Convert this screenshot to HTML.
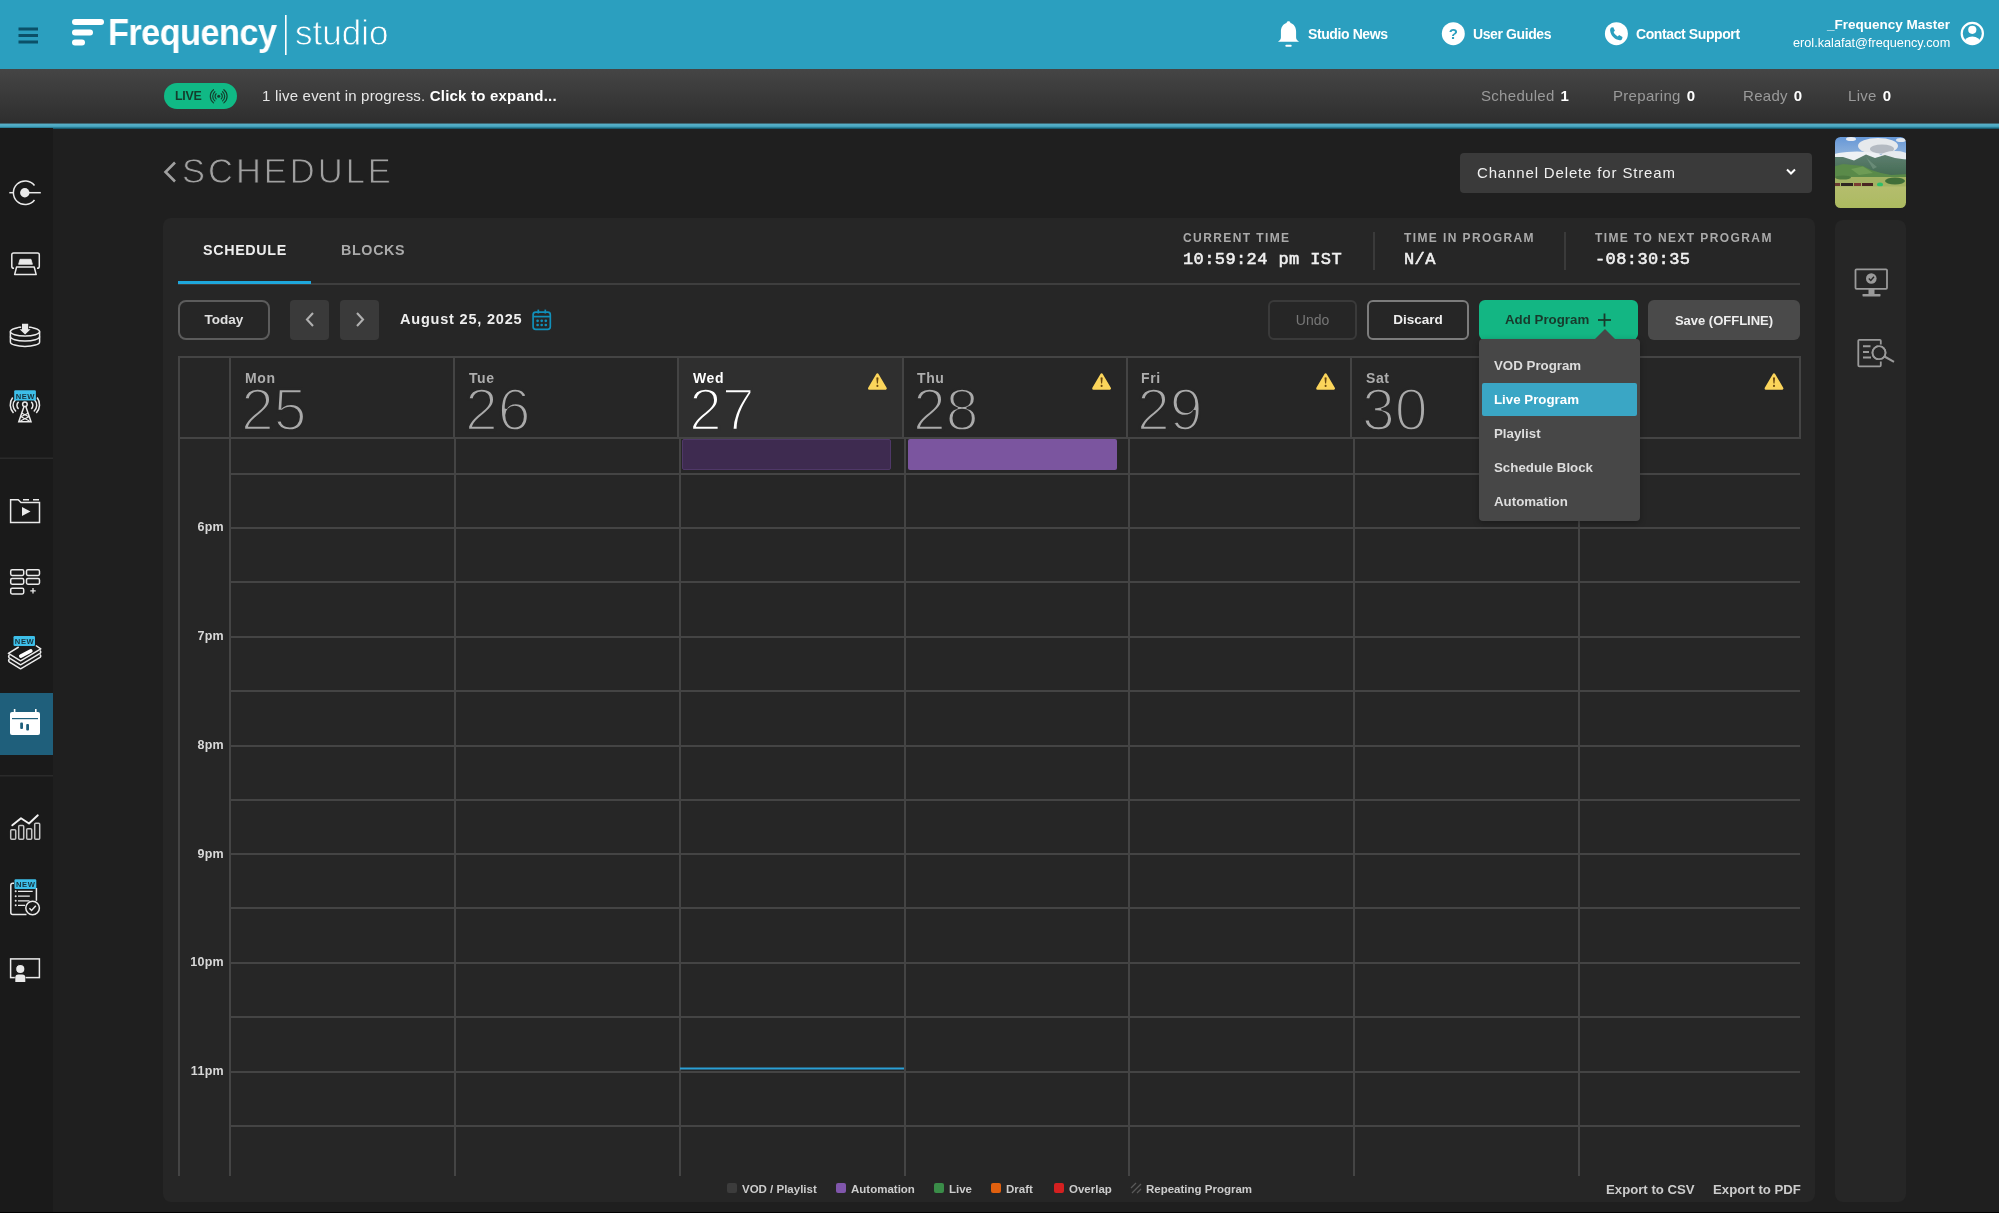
<!DOCTYPE html>
<html><head><meta charset="utf-8">
<style>
*{box-sizing:border-box;margin:0;padding:0}
html,body{width:1999px;height:1213px;overflow:hidden}
.a{will-change:transform}
body{background:#1f1f1f;font-family:"Liberation Sans",sans-serif;position:relative;color:#ddd}
.a{position:absolute;white-space:nowrap}
#hdr{left:0;top:0;width:1999px;height:69px;background:#2b9fbf}
#live{left:0;top:69px;width:1999px;height:54px;background:linear-gradient(#454545,#2e2e2e)}
#liveline{left:0;top:122.5px;width:1999px;height:5.5px;background:linear-gradient(#2a2a2a 0%,#58b0c8 18%,#4aa8c2 55%,#1d6f86 85%,#0e3f50 100%)}
#side{left:0;top:128px;width:53px;height:1085px;background:#1a1a1a}
#panel{left:163px;top:218px;width:1652px;height:984px;background:#262626;border-radius:8px}
#rpanel{left:1835px;top:220px;width:71px;height:982px;background:#262626;border-radius:8px}
.hl{font-size:14px;font-weight:bold;color:#fff;line-height:1;letter-spacing:-0.4px}
.stat{font-size:15px;color:#9a9a9a;line-height:1;letter-spacing:0.3px}
.stat b{color:#fff;margin-left:6px}
.tab{font-size:14.3px;font-weight:bold;letter-spacing:0.65px;line-height:1}
.lab{font-size:12px;font-weight:bold;letter-spacing:1.4px;color:#aaa;line-height:1}
.mono{font-family:"Liberation Mono",monospace;font-size:17px;font-weight:normal;color:#f0f0f0;line-height:1;letter-spacing:0.4px;-webkit-text-stroke:0.55px #f0f0f0}
.btn{height:40px;border-radius:6px;font-size:14px;font-weight:bold;display:flex;align-items:center;justify-content:center;line-height:1}
.dname{font-size:14px;color:#adadad;line-height:1;letter-spacing:0.6px;font-weight:bold}
.dnum{font-size:59px;color:#aaa;line-height:1;-webkit-text-stroke:2.4px #262626}
.tl{font-size:12.5px;color:#d8d8d8;font-weight:bold;line-height:1;text-align:right;width:52px;left:172px;letter-spacing:0.3px}
.dd{font-size:13.3px;color:#ddd;font-weight:bold;line-height:1;left:1494px}
.lg{font-size:11.5px;font-weight:bold;color:#ccc;line-height:1}
.sq{width:10px;height:10px;border-radius:2px}
</style></head><body>
<div id="hdr" class="a"></div>
<div id="live" class="a"></div>
<div id="liveline" class="a"></div>
<div id="side" class="a"></div>
<div id="panel" class="a"></div>
<div id="rpanel" class="a"></div>
<div class="a" style="left:0;top:1212px;width:1999px;height:1px;background:#000"></div>

<!-- header text -->
<div class="a" style="left:108px;top:14px;font-size:37px;font-weight:bold;color:#fff;letter-spacing:-0.6px;line-height:1;transform:scaleX(0.927);transform-origin:0 0">Frequency</div>
<div class="a" style="left:295px;top:15px;font-size:35px;color:#fff;line-height:1;-webkit-text-stroke:0.8px #2b9fbf">studio</div>
<div class="a hl" style="left:1308px;top:27px">Studio News</div>
<div class="a hl" style="left:1473px;top:27px">User Guides</div>
<div class="a hl" style="left:1636px;top:27px">Contact Support</div>
<div class="a" style="right:49px;top:18px;font-size:13.5px;font-weight:bold;color:#fff;line-height:1">_Frequency Master</div>
<div class="a" style="right:49px;top:37px;font-size:12.7px;color:#fff;line-height:1">erol.kalafat@frequency.com</div>

<!-- live bar -->
<div class="a" style="left:164px;top:83px;width:73px;height:26px;border-radius:13px;background:#10b985"></div>
<div class="a" style="left:175px;top:90px;font-size:12.4px;font-weight:bold;color:#143d2c;letter-spacing:-0.3px;line-height:1">LIVE</div>
<div class="a" style="left:262px;top:88px;font-size:15px;color:#e6e6e6;line-height:1;letter-spacing:0.2px">1 live event in progress. <b style="color:#fff">Click to expand...</b></div>
<div class="a stat" style="left:1481px;top:88px">Scheduled<b>1</b></div>
<div class="a stat" style="left:1613px;top:88px">Preparing<b>0</b></div>
<div class="a stat" style="left:1743px;top:88px">Ready<b>0</b></div>
<div class="a stat" style="left:1848px;top:88px">Live<b>0</b></div>

<!-- title -->
<div class="a" style="left:182px;top:153.5px;font-size:34.5px;color:#a0a0a0;letter-spacing:3px;line-height:1;-webkit-text-stroke:0.9px #1f1f1f">SCHEDULE</div>

<!-- channel dropdown -->
<div class="a" style="left:1460px;top:153px;width:352px;height:40px;background:#3a3a3a;border-radius:4px"></div>
<div class="a" style="left:1477px;top:165px;font-size:15px;color:#f0f0f0;letter-spacing:0.85px;line-height:1">Channel Delete for Stream</div>

<!-- thumbnail -->
<svg class="a" style="left:1835px;top:137px" width="71" height="71" viewBox="0 0 71 71">
 <defs>
  <clipPath id="tc"><rect x="0" y="0" width="71" height="71" rx="5.5"/></clipPath>
  <filter id="bl" x="-10%" y="-10%" width="120%" height="120%"><feGaussianBlur stdDeviation="0.7"/></filter>
  <linearGradient id="sky" x1="0" y1="0" x2="0" y2="1"><stop offset="0" stop-color="#5f93d6"/><stop offset="1" stop-color="#a9c3de"/></linearGradient>
  <linearGradient id="grass" x1="0" y1="0" x2="0" y2="1"><stop offset="0" stop-color="#b4bd6e"/><stop offset="1" stop-color="#abba5e"/></linearGradient>
  <linearGradient id="mtn" x1="0" y1="0" x2="0" y2="1"><stop offset="0" stop-color="#5d7f70"/><stop offset="1" stop-color="#41684f"/></linearGradient>
 </defs>
 <g clip-path="url(#tc)">
 <g filter="url(#bl)">
  <rect x="-3" y="-3" width="77" height="33" fill="url(#sky)"/>
  <ellipse cx="43" cy="9" rx="20" ry="8" fill="#e6e9ec"/>
  <ellipse cx="47" cy="12" rx="12" ry="4.5" fill="#b4bac2"/>
  <ellipse cx="22" cy="20" rx="26" ry="5.5" fill="#eef1f4"/>
  <ellipse cx="60" cy="19" rx="14" ry="5" fill="#e6eaee"/>
  <ellipse cx="16" cy="2" rx="5" ry="2" fill="#e8ecf2"/>
  <ellipse cx="66" cy="3" rx="5" ry="2" fill="#dfe6ee"/>
  <path d="M-3 20 L8 20 L19 23.5 L31 17.5 L40 21 L50 18 L60 21 L74 23 V42 H-3 Z" fill="url(#mtn)"/>
  <path d="M31 20 L36 25 L42 30 L38 32 Z" fill="#7a9a86" opacity="0.6"/>
  <path d="M-3 30 L8 27 L18 28 L28 29 L36 33 L46 36 L56 38 L74 37 V44 H-3 Z" fill="#5a8a4a"/>
  <path d="M16 32 L28 29.5 L38 36 L24 38 Z" fill="#6e9c55"/>
  <rect x="-3" y="40" width="77" height="10" fill="#a2b264"/>
  <ellipse cx="60" cy="44" rx="10" ry="3.5" fill="#3f6e38"/>
  <ellipse cx="8" cy="40.5" rx="8" ry="2" fill="#4e7a40"/>
  <rect x="-3" y="46" width="8" height="3" fill="#6a3a32"/><rect x="6" y="46" width="12" height="3" fill="#2e2622"/><rect x="19" y="46" width="7" height="3" fill="#7a3a32"/><rect x="27" y="46" width="11" height="3" fill="#4a2624"/>
  <ellipse cx="45" cy="47.5" rx="3" ry="2" fill="#2fbf6a"/>
  <rect x="-3" y="49.5" width="77" height="25" fill="url(#grass)"/>
 </g>
 </g>
</svg>

<!-- tabs -->
<div class="a tab" style="left:203px;top:243px;color:#eee">SCHEDULE</div>
<div class="a tab" style="left:341px;top:243px;color:#aaa">BLOCKS</div>

<!-- stats labels -->
<div class="a lab" style="left:1183px;top:232px">CURRENT TIME</div>
<div class="a mono" style="left:1183px;top:251px">10:59:24 pm IST</div>
<div class="a lab" style="left:1404px;top:232px">TIME IN PROGRAM</div>
<div class="a mono" style="left:1404px;top:251px">N/A</div>
<div class="a lab" style="left:1595px;top:232px">TIME TO NEXT PROGRAM</div>
<div class="a mono" style="left:1595px;top:251px">-08:30:35</div>

<!-- toolbar -->
<div class="a btn" style="left:178px;top:300px;width:92px;border:2px solid #5c5c5c;border-radius:8px;color:#e0e0e0;font-size:13.5px">Today</div>
<div class="a" style="left:290px;top:300px;width:39px;height:40px;background:#3a3a3a;border-radius:4px"></div>
<div class="a" style="left:340px;top:300px;width:39px;height:40px;background:#3a3a3a;border-radius:4px"></div>
<div class="a" style="left:400px;top:312px;font-size:14.5px;font-weight:bold;color:#eee;letter-spacing:0.8px;line-height:1">August 25, 2025</div>

<div class="a btn" style="left:1268px;top:300px;width:89px;border:2px solid #3a3a3a;color:#777;font-weight:normal">Undo</div>
<div class="a btn" style="left:1367px;top:300px;width:102px;border:2px solid #7c7c7c;color:#eee;font-size:13.5px">Discard</div>
<div class="a btn" style="left:1479px;top:300px;width:159px;background:#13b683;color:#183a2c;justify-content:flex-start;padding-left:26px;font-size:13.3px">Add Program</div>
<div class="a btn" style="left:1648px;top:300px;width:152px;background:#4a4a4a;color:#eee;font-size:13px">Save (OFFLINE)</div>

<!-- header cells -->
<div class="a" style="left:679px;top:357px;width:224px;height:81px;background:#2f2f2f"></div>

<div class="a dname" style="left:245px;top:371px">Mon</div>
<div class="a dnum" style="left:241px;top:381px">25</div>
<div class="a dname" style="left:469px;top:371px">Tue</div>
<div class="a dnum" style="left:465px;top:381px">26</div>
<div class="a dname" style="left:693px;top:371px;color:#fff;font-weight:bold">Wed</div>
<div class="a dnum" style="left:689px;top:381px;color:#fff;-webkit-text-stroke-color:#2f2f2f">27</div>
<div class="a dname" style="left:917px;top:371px">Thu</div>
<div class="a dnum" style="left:913px;top:381px">28</div>
<div class="a dname" style="left:1141px;top:371px">Fri</div>
<div class="a dnum" style="left:1137px;top:381px">29</div>
<div class="a dname" style="left:1366px;top:371px">Sat</div>
<div class="a dnum" style="left:1362px;top:381px">30</div>

<!-- events -->
<div class="a" style="left:682px;top:439px;width:209px;height:31px;background:#3e2b50;border:1px solid #4f3868;border-radius:2px"></div>
<div class="a" style="left:908px;top:439px;width:209px;height:31px;background:#7b559f;border-radius:2px"></div>

<!-- time labels -->
<div class="a tl" style="top:521px">6pm</div>
<div class="a tl" style="top:630px">7pm</div>
<div class="a tl" style="top:739px">8pm</div>
<div class="a tl" style="top:848px">9pm</div>
<div class="a tl" style="top:956px">10pm</div>
<div class="a tl" style="top:1065px">11pm</div>

<!-- grid svg -->
<svg class="a" style="left:0;top:0" width="1999" height="1213" viewBox="0 0 1999 1213">
 <g stroke="#444" stroke-width="2" fill="none" shape-rendering="crispEdges">
  <!-- header box -->
  <line x1="178" y1="357" x2="1800" y2="357"/>
  <line x1="178" y1="438" x2="1800" y2="438"/>
  <line x1="179" y1="356" x2="179" y2="1176"/>
  <line x1="1800" y1="356" x2="1800" y2="439"/>
  <line x1="230" y1="356" x2="230" y2="439"/>
  <line x1="454" y1="356" x2="454" y2="439"/>
  <line x1="678" y1="356" x2="678" y2="439"/>
  <line x1="903" y1="356" x2="903" y2="439"/>
  <line x1="1127" y1="356" x2="1127" y2="439"/>
  <line x1="1351" y1="356" x2="1351" y2="439"/>
  <line x1="1576" y1="356" x2="1576" y2="439"/>
  <!-- body verticals -->
  <line x1="230" y1="438" x2="230" y2="1176"/>
  <line x1="455" y1="438" x2="455" y2="1176"/>
  <line x1="680" y1="438" x2="680" y2="1176"/>
  <line x1="905" y1="438" x2="905" y2="1176"/>
  <line x1="1129" y1="438" x2="1129" y2="1176"/>
  <line x1="1354" y1="438" x2="1354" y2="1176"/>
  <line x1="1579" y1="438" x2="1579" y2="1176"/>
  <!-- horizontals -->
  <line x1="230" y1="474" x2="1800" y2="474"/>
  <line x1="230" y1="528" x2="1800" y2="528"/>
  <line x1="230" y1="582" x2="1800" y2="582"/>
  <line x1="230" y1="637" x2="1800" y2="637"/>
  <line x1="230" y1="691" x2="1800" y2="691"/>
  <line x1="230" y1="746" x2="1800" y2="746"/>
  <line x1="230" y1="800" x2="1800" y2="800"/>
  <line x1="230" y1="854" x2="1800" y2="854"/>
  <line x1="230" y1="908" x2="1800" y2="908"/>
  <line x1="230" y1="963" x2="1800" y2="963"/>
  <line x1="230" y1="1017" x2="1800" y2="1017"/>
  <line x1="230" y1="1072" x2="1800" y2="1072"/>
  <line x1="230" y1="1126" x2="1800" y2="1126"/>
 </g>
 <!-- tab line -->
 <rect x="178" y="283" width="1622" height="2" fill="#3e3e3e"/>
 <rect x="178" y="281" width="133" height="3" fill="#1ea7dc"/>
 <!-- stat dividers -->
 <rect x="1373" y="232" width="2" height="38" fill="#3a3a3a"/>
 <rect x="1564" y="232" width="2" height="38" fill="#3a3a3a"/>

 <g stroke="#5a5a5a" stroke-width="1.2">
  <line x1="1131" y1="1188" x2="1136" y2="1183"/>
  <line x1="1132" y1="1193" x2="1141" y2="1184"/>
  <line x1="1137" y1="1193" x2="1141" y2="1189"/>
 </g>
 <!-- current time line -->
 <rect x="680" y="1067.5" width="224" height="2" fill="#2a9fd6"/>
</svg>


<!-- ICONS -->
<svg class="a" style="left:0;top:0" width="1999" height="1213" viewBox="0 0 1999 1213">
 <!-- hamburger -->
 <g fill="#0b5068">
  <rect x="18.5" y="27.5" width="19.5" height="3"/>
  <rect x="18.5" y="34" width="19.5" height="3"/>
  <rect x="18.5" y="40.5" width="19.5" height="3"/>
 </g>
 <!-- logo bars -->
 <g stroke="#fff" stroke-width="6" stroke-linecap="round">
  <line x1="75" y1="22" x2="101" y2="22"/>
  <line x1="75" y1="32.5" x2="90" y2="32.5"/>
  <line x1="75" y1="42.5" x2="82" y2="42.5"/>
 </g>
 <rect x="285" y="15" width="1.6" height="40" fill="#fff"/>
 <!-- bell -->
 <path d="M1288.5 21.3 c1.1 0 1.8 .7 2 1.6 c3.6 1.1 5.6 4.4 5.6 8.6 v6 c0 1.6 .8 2.6 2 3.4 q.9 .6 .9 .9 h-21 q0 -.3 .9 -.9 c1.2 -.8 2 -1.8 2 -3.4 v-6 c0 -4.2 2 -7.5 5.6 -8.6 c.2 -.9 .9 -1.6 2 -1.6z" fill="#fff"/>
 <rect x="1285.3" y="44.8" width="6.4" height="2" rx="1" fill="#fff"/>
 <!-- ? circle -->
 <circle cx="1453.3" cy="33.7" r="11.5" fill="#fff"/>
 <text x="1453.3" y="39.2" text-anchor="middle" font-family="Liberation Sans" font-weight="bold" font-size="15" fill="#2b9fbf">?</text>
 <!-- phone circle -->
 <circle cx="1616.4" cy="33.7" r="11.5" fill="#fff"/>
 <path d="M1611.3 27.6 l2 -.4 l1.6 3.6 l-1.3 1.3 c.8 2 2.2 3.5 4.2 4.3 l1.3 -1.3 l3.4 1.8 l-.4 2.2 c-.4 .8 -1.4 1.3 -2.4 1.2 c-5.2 -.8 -8.8 -4.5 -9.6 -9.8 c-.1 -1 .4 -2.2 1.2 -2.9z" fill="#2b9fbf"/>
 <!-- user circle -->
 <defs><clipPath id="uc"><circle cx="1972.3" cy="33.5" r="10.6"/></clipPath></defs>
 <circle cx="1972.3" cy="33.5" r="10.6" fill="none" stroke="#fff" stroke-width="2.2"/>
 <circle cx="1972.3" cy="29.8" r="4.1" fill="#fff"/>
 <ellipse cx="1972.3" cy="43.5" rx="8.5" ry="7" fill="#fff" clip-path="url(#uc)"/>
 <!-- live broadcast icon -->
 <g fill="none" stroke="#143d2c" stroke-width="1.15" stroke-linecap="round">
  <circle cx="218.7" cy="96.3" r="1.5" fill="#143d2c" stroke="none"/>
  <path d="M216.15 93.75 A3.6 3.6 0 0 0 216.15 98.85"/>
  <path d="M221.25 93.75 A3.6 3.6 0 0 1 221.25 98.85"/>
  <path d="M214.84 91.70 A6.0 6.0 0 0 0 214.84 100.90"/>
  <path d="M222.56 91.70 A6.0 6.0 0 0 1 222.56 100.90"/>
  <path d="M213.53 89.68 A8.4 8.4 0 0 0 213.53 102.92"/>
  <path d="M223.87 89.68 A8.4 8.4 0 0 1 223.87 102.92"/>
 </g>
 <!-- title chevron -->
 <path d="M175 162.5 l-9.5 9.5 l9.5 9.5" fill="none" stroke="#a0a0a0" stroke-width="2.6"/>
 <!-- channel chevron -->
 <path d="M1787 169.5 l4 4 l4 -4" fill="none" stroke="#fff" stroke-width="2"/>
 <!-- prev/next -->
 <path d="M313 313 l-6 6.5 l6 6.5" fill="none" stroke="#b0b0b0" stroke-width="2.1"/>
 <path d="M357 313 l6 6.5 l-6 6.5" fill="none" stroke="#b0b0b0" stroke-width="2.1"/>
 <!-- calendar icon -->
 <g fill="none" stroke="#1190ba" stroke-width="1.7">
  <rect x="533.1" y="312.2" width="17.2" height="17.2" rx="2.6"/>
  <line x1="533.5" y1="316.6" x2="550" y2="316.6"/>
  <line x1="538.3" y1="309.6" x2="538.3" y2="313.5"/>
  <line x1="545.3" y1="309.6" x2="545.3" y2="313.5"/>
 </g>
 <g fill="#1190ba">
  <circle cx="537.6" cy="320.8" r="1.35"/><circle cx="541.7" cy="320.8" r="1.35"/><circle cx="545.8" cy="320.8" r="1.35"/>
  <circle cx="537.6" cy="325" r="1.35"/><circle cx="541.7" cy="325" r="1.35"/><circle cx="545.8" cy="325" r="1.35"/>
 </g>
 <!-- plus -->
 <g stroke="#183a2c" stroke-width="1.8"><line x1="1598" y1="320" x2="1611" y2="320"/><line x1="1604.5" y1="313.5" x2="1604.5" y2="326.5"/></g>
 <!-- warnings -->
  <path d="M877.4 374.6 L885.5 388.4 H869.3 Z" fill="#fbd55b" stroke="#fbd55b" stroke-width="2.6" stroke-linejoin="round"/>
  <path d="M876.3 377.8 Q877.4 376.8 878.5 377.8 L877.9 383.6 H876.9 Z" fill="#6a4810"/><circle cx="877.4" cy="385.9" r="1.05" fill="#6a4810"/>
  <path d="M1101.6 374.6 L1109.6999999999998 388.4 H1093.5 Z" fill="#fbd55b" stroke="#fbd55b" stroke-width="2.6" stroke-linejoin="round"/>
  <path d="M1100.5 377.8 Q1101.6 376.8 1102.6999999999998 377.8 L1102.1 383.6 H1101.1 Z" fill="#6a4810"/><circle cx="1101.6" cy="385.9" r="1.05" fill="#6a4810"/>
  <path d="M1325.6 374.6 L1333.6999999999998 388.4 H1317.5 Z" fill="#fbd55b" stroke="#fbd55b" stroke-width="2.6" stroke-linejoin="round"/>
  <path d="M1324.5 377.8 Q1325.6 376.8 1326.6999999999998 377.8 L1326.1 383.6 H1325.1 Z" fill="#6a4810"/><circle cx="1325.6" cy="385.9" r="1.05" fill="#6a4810"/>
  <path d="M1774 374.6 L1782.1 388.4 H1765.9 Z" fill="#fbd55b" stroke="#fbd55b" stroke-width="2.6" stroke-linejoin="round"/>
  <path d="M1772.9 377.8 Q1774 376.8 1775.1 377.8 L1774.5 383.6 H1773.5 Z" fill="#6a4810"/><circle cx="1774" cy="385.9" r="1.05" fill="#6a4810"/>
</svg>


<!-- SIDEBAR ICONS -->
<svg class="a" style="left:0;top:0" width="1999" height="1213" viewBox="0 0 1999 1213">
 <rect x="0" y="457.5" width="53" height="1.5" fill="#2a2a2a"/>
 <rect x="0" y="775" width="53" height="1.5" fill="#2a2a2a"/>
 <rect x="0" y="693" width="53" height="62" fill="#1f5f7b"/>
 <g fill="none" stroke="#eaeaea" stroke-width="1.5">
  <!-- icon1 -->
  <path d="M34.5 185.5 A11.8 11.8 0 1 0 34.5 200"/>
  <line x1="9.3" y1="192.7" x2="14" y2="192.7"/>
  <line x1="25" y1="192.7" x2="40.8" y2="192.7"/>
  <!-- icon2 -->
  <path d="M14 268.3 Q11.8 268.3 11.8 266.5 V254.8 Q11.8 253 13.6 253 H37.5 Q39.3 253 39.3 254.8 V266.5 Q39.3 268.3 37 268.3"/>
  <path d="M16.6 267 H34.2 L36.2 274.6 H14.6 Z" stroke-linejoin="round"/>
  <!-- icon3 disks -->
  <ellipse cx="25" cy="331.6" rx="14.6" ry="4.5"/>
  <path d="M10.4 331.6 V336.5 A14.6 4.5 0 0 0 39.6 336.5 V331.6"/>
  <path d="M10.4 336.5 V341.9 A14.6 4.5 0 0 0 39.6 341.9 V336.5"/>
  <!-- icon4 antenna -->
  <circle cx="24.9" cy="404.3" r="2.3"/>
  <path d="M24 406.5 L18.8 421.8 H31 L25.8 406.5"/>
  <path d="M20.5 416.5 L29.5 421 M29.3 416.5 L20.3 421 M21.5 413 L28.5 416.5 M28.3 413 L21.5 416.5" stroke-width="1.1"/>
  <path d="M18.6 401.8 A4.5 4.5 0 0 0 18.6 408.8"/>
  <path d="M31.2 401.8 A4.5 4.5 0 0 1 31.2 408.8"/>
  <path d="M15.6 399.5 A8 8 0 0 0 16 411.5"/>
  <path d="M34.2 399.5 A8 8 0 0 1 33.8 411.5"/>
  <path d="M12.7 397.5 A12 12 0 0 0 13.5 413"/>
  <path d="M37.1 397.5 A12 12 0 0 1 36.3 413"/>
  <!-- icon5 folder -->
  <path d="M10.6 522.6 V499.8 H18.2 L21 502.6 H39.5 V522.6 Z"/>
  <path d="M23 499.8 H29 M33 499.8 H39" />
  <!-- icon6 grid -->
  <rect x="10.7" y="569.8" width="13" height="5.6" rx="1.4"/>
  <rect x="26.5" y="569.8" width="13" height="5.6" rx="1.4"/>
  <rect x="10.7" y="578.6" width="13" height="5.6" rx="1.4"/>
  <rect x="26.5" y="578.6" width="13" height="5.6" rx="1.4"/>
  <rect x="10.7" y="588.3" width="13" height="5.6" rx="1.4"/>
  <path d="M33 588 V593.5 M30.3 590.8 H35.7" stroke-width="1.3"/>
  <!-- icon7 stack -->
  <path d="M18.7 647 L8.4 653.4 L20.6 660.8 L40.8 648.9 L35.8 645.5" stroke-linejoin="round"/>
  <path d="M9.5 655 Q8 656.2 9.2 657.8 L20.6 664.8 L40 653.4 Q41.5 652 40 650.6" stroke-linejoin="round"/>
  <path d="M9.5 659 Q8 660.2 9.2 661.8 L20.6 668.8 L40 657.4 Q41.5 656 40 654.6" stroke-linejoin="round"/>
  <!-- icon9 chart -->
  <rect x="10.7" y="829.8" width="5" height="9.5" rx="1" stroke="#c4c4c4"/>
  <rect x="18.7" y="825.5" width="5" height="13.8" rx="1" stroke="#c4c4c4"/>
  <rect x="26.7" y="828.8" width="5" height="10.5" rx="1" stroke="#c4c4c4"/>
  <rect x="34.7" y="823.3" width="5" height="16" rx="1" stroke="#c4c4c4"/>
  <path d="M12.3 825.3 L21 818.3 L29 823.5 L37.8 815.3" stroke="#f2f2f2" stroke-width="1.9" stroke-linecap="round" stroke-linejoin="round"/>
  <!-- icon10 doc -->
  <path d="M14 883.2 H12.8 Q10.8 883.2 10.8 885.2 V912.4 Q10.8 914.4 12.8 914.4 H26.5"/>
  <path d="M36.4 888 V900.8"/>
  <circle cx="32.6" cy="908" r="6.8"/>
  <path d="M29.4 908.2 L31.6 910.5 L35.8 905.8"/>
  <path d="M18 891.3 H32.7 M18 896.2 H29.8 M18 900.8 H29.5 M18 905.3 H25" stroke-width="1.3"/>
  <!-- icon11 presenter -->
  <rect x="10.6" y="958.9" width="28.8" height="18.7"/>
 </g>
 <g fill="#eaeaea">
  <circle cx="24.8" cy="192.7" r="4.7"/>
  <path d="M20 259.3 H31 L32.4 264.3 H18.6 Z" stroke="#eaeaea" stroke-width="0.8" stroke-linejoin="round"/>
  <path d="M22 323.7 H28.2 V329.3 H30.6 L25.1 334.5 L19.6 329.3 H22 Z" stroke="#1a1a1a" stroke-width="1.6" paint-order="stroke"/>
  <path d="M22 507 L30.5 511.5 L22 516 Z"/>
  <circle cx="15.7" cy="891.3" r="1"/><circle cx="15.7" cy="896.2" r="1"/><circle cx="15.7" cy="900.8" r="1"/><circle cx="15.7" cy="905.3" r="1"/>
  <circle cx="20.3" cy="969" r="4.7" stroke="#1a1a1a" stroke-width="1.2"/>
  <path d="M15.3 982 V977.5 Q15.3 974.5 18.3 974.5 H22.3 Q25.3 974.5 25.3 977.5 V982 Z" stroke="#1a1a1a" stroke-width="1" paint-order="stroke"/>
 </g>
 <line x1="20.8" y1="656.2" x2="30.8" y2="650.9" stroke="#fff" stroke-width="3.6" stroke-linecap="round"/>
 <!-- NEW badges -->
 <g>
  <rect x="14.2" y="390.3" width="21.7" height="10.3" rx="1.2" fill="#3dbfe9"/>
  <rect x="13.5" y="636" width="21.5" height="10" rx="1.2" fill="#3dbfe9"/>
  <rect x="14.5" y="879.2" width="21.8" height="9.8" rx="1.2" fill="#3dbfe9"/>
 </g>
 <g font-family="Liberation Sans" font-weight="bold" font-size="7.6" fill="#17323c" text-anchor="middle" letter-spacing="0.6">
  <text x="25.4" y="398.5">NEW</text>
  <text x="24.6" y="644">NEW</text>
  <text x="25.7" y="887">NEW</text>
 </g>
 <!-- calendar active -->
 <path d="M12 712 H38 Q40 712 40 714 V733 Q40 735 38 735 H12 Q10 735 10 733 V714 Q10 712 12 712 Z" fill="#fff"/>
 <rect x="13.8" y="709" width="1.6" height="4" fill="#fff"/>
 <rect x="35" y="709" width="1.6" height="4" fill="#fff"/>
 <rect x="12" y="718" width="26" height="1.2" fill="#1f5f7b"/>
 <rect x="20.2" y="722.5" width="2.8" height="6.5" rx="1" fill="#1f5f7b"/>
 <rect x="26.2" y="724" width="2.8" height="6.5" rx="1" fill="#1f5f7b"/>
</svg>

<!-- RIGHT PANEL ICONS -->
<svg class="a" style="left:0;top:0" width="1999" height="1213" viewBox="0 0 1999 1213">
 <g fill="none" stroke="#9a9a9a" stroke-width="1.8">
  <rect x="1855.5" y="269.3" width="31.5" height="19.5" rx="1"/>
  <rect x="1858.3" y="339.8" width="22.5" height="26.5" rx="1"/>
  
  <circle cx="1879" cy="352.7" r="6.5"/>
  <path d="M1884.5 356.5 L1894 361.8" stroke-width="2.1"/>
  <path d="M1863 346.3 H1870.5 M1863 352 H1869 M1863 357.5 H1871" stroke-width="2.1"/>
 </g>
 <rect x="1878" y="344.5" width="4" height="17" fill="#262626"/>
 <circle cx="1879" cy="352.7" r="5.6" fill="#262626"/>
 <circle cx="1879" cy="352.7" r="6.5" fill="none" stroke="#9a9a9a" stroke-width="1.8"/>
 <g fill="#9a9a9a">
  <circle cx="1871.3" cy="278.5" r="5.3"/>
  <rect x="1868.5" y="289" width="6" height="5.5"/>
  <rect x="1862.5" y="294" width="18" height="2.4" rx="0.6"/>
 </g>
 <path d="M1868.8 278.6 L1870.8 280.5 L1874 276.8" fill="none" stroke="#262626" stroke-width="1.4"/>
</svg>

<!-- dropdown -->
<div class="a" style="left:1479px;top:339px;width:161px;height:182px;background:#474747;border-radius:4px;box-shadow:0 2px 6px rgba(0,0,0,.3)"></div>
<svg class="a" style="left:1590px;top:327px" width="30" height="14" viewBox="0 0 30 14"><path d="M3 14 L15 2 L27 14 Z" fill="#474747"/></svg>
<div class="a" style="left:1482px;top:383px;width:155px;height:33px;background:#3aa6c5;border-radius:2px"></div>
<div class="a dd" style="top:359px">VOD Program</div>
<div class="a dd" style="top:393px;color:#fff">Live Program</div>
<div class="a dd" style="top:427px">Playlist</div>
<div class="a dd" style="top:461px">Schedule Block</div>
<div class="a dd" style="top:495px">Automation</div>

<!-- legend -->
<div class="a sq" style="left:727px;top:1183px;background:#3c3c3c"></div>
<div class="a lg" style="left:742px;top:1184px">VOD / Playlist</div>
<div class="a sq" style="left:836px;top:1183px;background:#8056ab"></div>
<div class="a lg" style="left:851px;top:1184px">Automation</div>
<div class="a sq" style="left:934px;top:1183px;background:#3a8c48"></div>
<div class="a lg" style="left:949px;top:1184px">Live</div>
<div class="a sq" style="left:991px;top:1183px;background:#e0600f"></div>
<div class="a lg" style="left:1006px;top:1184px">Draft</div>
<div class="a sq" style="left:1054px;top:1183px;background:#d42020"></div>
<div class="a lg" style="left:1069px;top:1184px">Overlap</div>
<div class="a lg" style="left:1146px;top:1184px">Repeating Program</div>
<div class="a" style="left:1606px;top:1183px;font-size:13.2px;font-weight:bold;color:#ccc;line-height:1">Export to CSV</div>
<div class="a" style="left:1713px;top:1183px;font-size:13.2px;font-weight:bold;color:#ccc;line-height:1">Export to PDF</div>

</body></html>
